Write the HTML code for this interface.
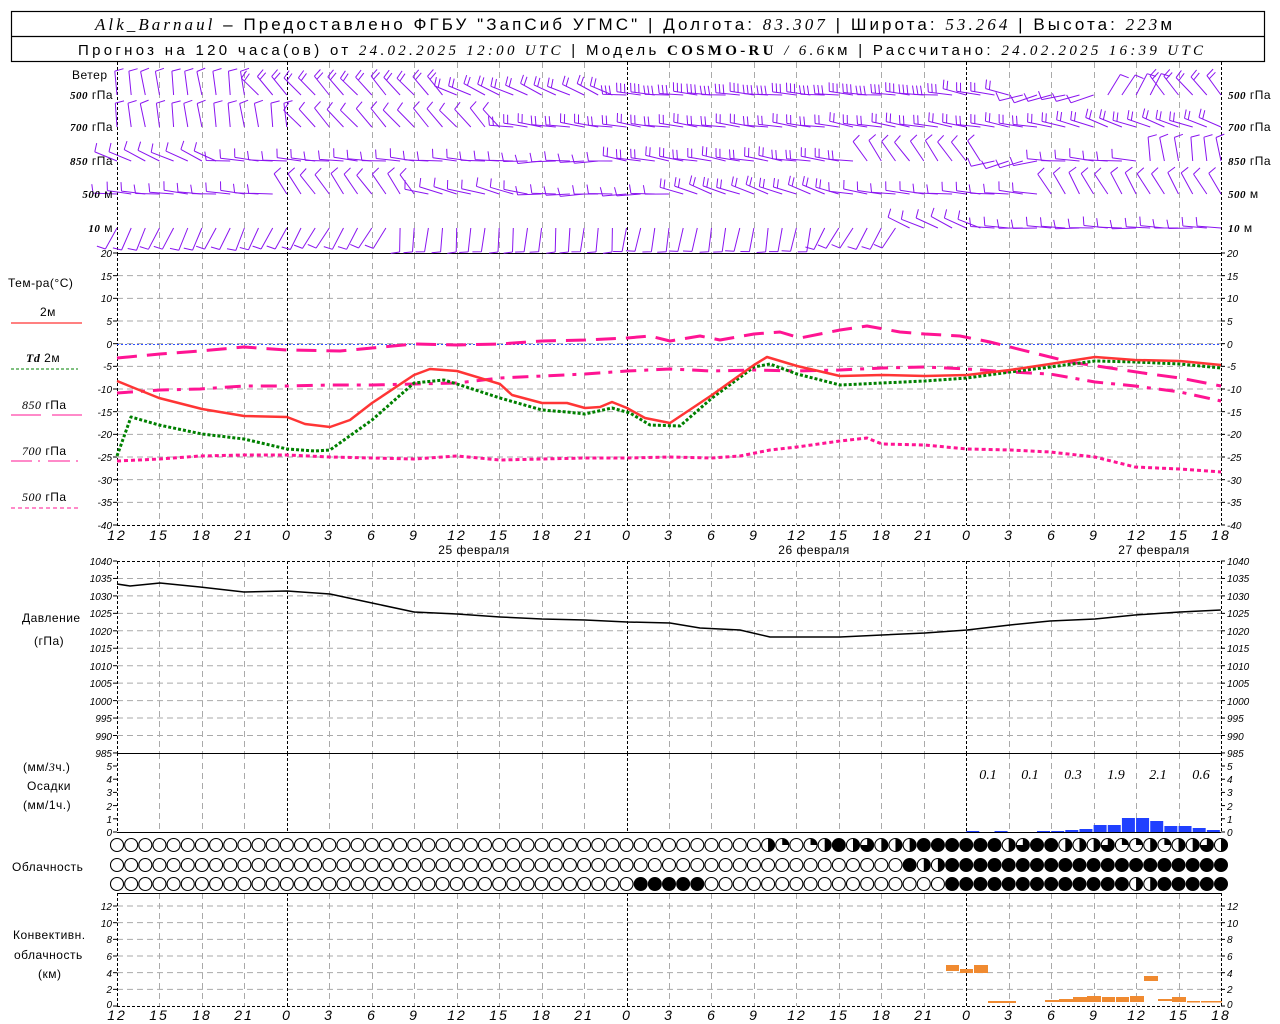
<!DOCTYPE html>
<html><head><meta charset="utf-8"><style>
html,body{margin:0;padding:0;background:#fff;width:1280px;height:1024px;overflow:hidden}
svg{display:block}
text{font-family:"Liberation Sans","DejaVu Sans",sans-serif;fill:#000}
.it{font-family:"Liberation Serif",serif;font-style:italic}
.ax{font-family:"Liberation Sans",sans-serif;font-style:italic;font-size:10px}
.tl{font-family:"Liberation Sans",sans-serif;font-style:italic;font-size:14px;letter-spacing:2px}
.lb{font-size:12px;letter-spacing:0.5px}
</style></head><body>
<svg id="s" width="1280" height="1024" viewBox="0 0 1280 1024" xmlns="http://www.w3.org/2000/svg">
<rect x="11.5" y="11.5" width="1253" height="50" fill="none" stroke="#000" stroke-width="1.2"/>
<line x1="11" y1="36.5" x2="1265" y2="36.5" stroke="#000" stroke-width="1.2"/>
<text x="95" y="30" font-size="17" letter-spacing="1" textLength="1078" lengthAdjust="spacing"><tspan class="it">Alk_Barnaul</tspan> – Предоставлено ФГБУ "ЗапСиб УГМС" | Долгота: <tspan class="it">83.307</tspan> | Широта: <tspan class="it">53.264</tspan> | Высота: <tspan class="it">223</tspan>м</text>
<text x="78" y="55" font-size="15" letter-spacing="1" textLength="1126" lengthAdjust="spacing">Прогноз на 120 часа(ов) от <tspan class="it">24.02.2025 12:00 UTC</tspan>  | Модель <tspan font-family="Liberation Serif" font-weight="bold">COSMO-RU</tspan> <tspan class="it">/ 6.6</tspan>км | Рассчитано: <tspan class="it">24.02.2025 16:39 UTC</tspan></text>

<g id="grid"></g>
<g id="data"></g>

<text x="72" y="79" class="lb">Ветер</text>
<text x="113" y="99" class="lb" text-anchor="end"><tspan class="it" font-weight="bold" font-size="11">500</tspan> гПа</text>
<text x="113" y="131" class="lb" text-anchor="end"><tspan class="it" font-weight="bold" font-size="11">700</tspan> гПа</text>
<text x="113" y="165" class="lb" text-anchor="end"><tspan class="it" font-weight="bold" font-size="11">850</tspan> гПа</text>
<text x="113" y="198" class="lb" text-anchor="end"><tspan class="it" font-weight="bold" font-size="11">500</tspan> м</text>
<text x="113" y="232" class="lb" text-anchor="end"><tspan class="it" font-weight="bold" font-size="11">10</tspan>   м</text>
<text x="1228" y="99" class="lb"><tspan class="it" font-weight="bold" font-size="11">500</tspan> гПа</text>
<text x="1228" y="131" class="lb"><tspan class="it" font-weight="bold" font-size="11">700</tspan> гПа</text>
<text x="1228" y="165" class="lb"><tspan class="it" font-weight="bold" font-size="11">850</tspan> гПа</text>
<text x="1228" y="198" class="lb"><tspan class="it" font-weight="bold" font-size="11">500</tspan> м</text>
<text x="1228" y="232" class="lb"><tspan class="it" font-weight="bold" font-size="11">10</tspan>   м</text>

<text x="8" y="287" class="lb">Тем-ра(°C)</text>
<text x="40" y="316" class="lb">2м</text>
<line x1="11" y1="323" x2="82" y2="323" stroke="#ff3535" stroke-width="1.3"/>
<text x="26" y="362" class="lb"><tspan class="it" font-weight="bold">Td</tspan>  2м</text>
<line x1="11" y1="369" x2="78" y2="369" stroke="#008000" stroke-width="1" stroke-dasharray="3 2"/>
<text x="22" y="409" class="lb"><tspan class="it">850</tspan>  гПа</text>
<line x1="11" y1="415" x2="41" y2="415" stroke="#ff1493" stroke-width="1"/><line x1="52" y1="415" x2="82" y2="415" stroke="#ff1493" stroke-width="1"/>
<text x="22" y="455" class="lb"><tspan class="it">700</tspan> гПа</text>
<line x1="11" y1="461" x2="32" y2="461" stroke="#ff1493"/><line x1="38" y1="461" x2="40" y2="461" stroke="#ff1493"/><line x1="48" y1="461" x2="70" y2="461" stroke="#ff1493"/><line x1="76" y1="461" x2="78" y2="461" stroke="#ff1493"/>
<text x="22" y="501" class="lb"><tspan class="it">500</tspan> гПа</text>
<line x1="11" y1="508" x2="78" y2="508" stroke="#ff1493" stroke-dasharray="4 3"/>

<text x="22" y="622" class="lb">Давление</text>
<text x="34" y="645" class="lb">(гПа)</text>
<text x="23" y="771" class="lb">(мм/<tspan class="it">3</tspan>ч.)</text>
<text x="27" y="790" class="lb">Осадки</text>
<text x="23" y="809" class="lb">(мм/1ч.)</text>
<text x="12" y="871" class="lb">Облачность</text>
<text x="13" y="939" class="lb">Конвективн.</text>
<text x="14" y="959" class="lb">облачность</text>
<text x="38" y="978" class="lb">(км)</text>

<text x="474" y="554" class="lb" text-anchor="middle" letter-spacing="1">25 февраля</text>
<text x="814" y="554" class="lb" text-anchor="middle" letter-spacing="1">26 февраля</text>
<text x="1154" y="554" class="lb" text-anchor="middle" letter-spacing="1">27 февраля</text>

<g font-size="14" text-anchor="middle">
<text x="988" y="779" class="it">0.1</text><text x="1030" y="779" class="it">0.1</text><text x="1073" y="779" class="it">0.3</text><text x="1116" y="779" class="it">1.9</text><text x="1158" y="779" class="it">2.1</text><text x="1201" y="779" class="it">0.6</text>
</g>

<g id="tlab">
<text class="tl" x="117" y="540" text-anchor="middle">12</text><text class="tl" x="159" y="540" text-anchor="middle">15</text><text class="tl" x="202" y="540" text-anchor="middle">18</text><text class="tl" x="244" y="540" text-anchor="middle">21</text><text class="tl" x="287" y="540" text-anchor="middle">0</text><text class="tl" x="329" y="540" text-anchor="middle">3</text><text class="tl" x="372" y="540" text-anchor="middle">6</text><text class="tl" x="414" y="540" text-anchor="middle">9</text><text class="tl" x="457" y="540" text-anchor="middle">12</text><text class="tl" x="499" y="540" text-anchor="middle">15</text><text class="tl" x="542" y="540" text-anchor="middle">18</text><text class="tl" x="584" y="540" text-anchor="middle">21</text><text class="tl" x="627" y="540" text-anchor="middle">0</text><text class="tl" x="669" y="540" text-anchor="middle">3</text><text class="tl" x="712" y="540" text-anchor="middle">6</text><text class="tl" x="754" y="540" text-anchor="middle">9</text><text class="tl" x="797" y="540" text-anchor="middle">12</text><text class="tl" x="839" y="540" text-anchor="middle">15</text><text class="tl" x="882" y="540" text-anchor="middle">18</text><text class="tl" x="924" y="540" text-anchor="middle">21</text><text class="tl" x="967" y="540" text-anchor="middle">0</text><text class="tl" x="1009" y="540" text-anchor="middle">3</text><text class="tl" x="1052" y="540" text-anchor="middle">6</text><text class="tl" x="1094" y="540" text-anchor="middle">9</text><text class="tl" x="1137" y="540" text-anchor="middle">12</text><text class="tl" x="1179" y="540" text-anchor="middle">15</text><text class="tl" x="1221" y="540" text-anchor="middle">18</text>
<text class="tl" x="117" y="1020" text-anchor="middle">12</text><text class="tl" x="159" y="1020" text-anchor="middle">15</text><text class="tl" x="202" y="1020" text-anchor="middle">18</text><text class="tl" x="244" y="1020" text-anchor="middle">21</text><text class="tl" x="287" y="1020" text-anchor="middle">0</text><text class="tl" x="329" y="1020" text-anchor="middle">3</text><text class="tl" x="372" y="1020" text-anchor="middle">6</text><text class="tl" x="414" y="1020" text-anchor="middle">9</text><text class="tl" x="457" y="1020" text-anchor="middle">12</text><text class="tl" x="499" y="1020" text-anchor="middle">15</text><text class="tl" x="542" y="1020" text-anchor="middle">18</text><text class="tl" x="584" y="1020" text-anchor="middle">21</text><text class="tl" x="627" y="1020" text-anchor="middle">0</text><text class="tl" x="669" y="1020" text-anchor="middle">3</text><text class="tl" x="712" y="1020" text-anchor="middle">6</text><text class="tl" x="754" y="1020" text-anchor="middle">9</text><text class="tl" x="797" y="1020" text-anchor="middle">12</text><text class="tl" x="839" y="1020" text-anchor="middle">15</text><text class="tl" x="882" y="1020" text-anchor="middle">18</text><text class="tl" x="924" y="1020" text-anchor="middle">21</text><text class="tl" x="967" y="1020" text-anchor="middle">0</text><text class="tl" x="1009" y="1020" text-anchor="middle">3</text><text class="tl" x="1052" y="1020" text-anchor="middle">6</text><text class="tl" x="1094" y="1020" text-anchor="middle">9</text><text class="tl" x="1137" y="1020" text-anchor="middle">12</text><text class="tl" x="1179" y="1020" text-anchor="middle">15</text><text class="tl" x="1221" y="1020" text-anchor="middle">18</text>
</g>

<g>
<text class="ax" x="112" y="257" text-anchor="end">20</text><text class="ax" x="112" y="280" text-anchor="end">15</text><text class="ax" x="112" y="302" text-anchor="end">10</text><text class="ax" x="112" y="325" text-anchor="end">5</text><text class="ax" x="112" y="348" text-anchor="end">0</text><text class="ax" x="112" y="370" text-anchor="end">-5</text><text class="ax" x="112" y="393" text-anchor="end">-10</text><text class="ax" x="112" y="416" text-anchor="end">-15</text><text class="ax" x="112" y="438" text-anchor="end">-20</text><text class="ax" x="112" y="461" text-anchor="end">-25</text><text class="ax" x="112" y="484" text-anchor="end">-30</text><text class="ax" x="112" y="506" text-anchor="end">-35</text><text class="ax" x="112" y="529" text-anchor="end">-40</text>
<text class="ax" x="1227" y="257">20</text><text class="ax" x="1227" y="280">15</text><text class="ax" x="1227" y="302">10</text><text class="ax" x="1227" y="325">5</text><text class="ax" x="1227" y="348">0</text><text class="ax" x="1227" y="370">-5</text><text class="ax" x="1227" y="393">-10</text><text class="ax" x="1227" y="416">-15</text><text class="ax" x="1227" y="438">-20</text><text class="ax" x="1227" y="461">-25</text><text class="ax" x="1227" y="484">-30</text><text class="ax" x="1227" y="506">-35</text><text class="ax" x="1227" y="529">-40</text>
<text class="ax" x="112" y="565" text-anchor="end">1040</text><text class="ax" x="112" y="582" text-anchor="end">1035</text><text class="ax" x="112" y="600" text-anchor="end">1030</text><text class="ax" x="112" y="617" text-anchor="end">1025</text><text class="ax" x="112" y="635" text-anchor="end">1020</text><text class="ax" x="112" y="652" text-anchor="end">1015</text><text class="ax" x="112" y="670" text-anchor="end">1010</text><text class="ax" x="112" y="687" text-anchor="end">1005</text><text class="ax" x="112" y="705" text-anchor="end">1000</text><text class="ax" x="112" y="722" text-anchor="end">995</text><text class="ax" x="112" y="740" text-anchor="end">990</text><text class="ax" x="112" y="757" text-anchor="end">985</text>
<text class="ax" x="1227" y="565">1040</text><text class="ax" x="1227" y="582">1035</text><text class="ax" x="1227" y="600">1030</text><text class="ax" x="1227" y="617">1025</text><text class="ax" x="1227" y="635">1020</text><text class="ax" x="1227" y="652">1015</text><text class="ax" x="1227" y="670">1010</text><text class="ax" x="1227" y="687">1005</text><text class="ax" x="1227" y="705">1000</text><text class="ax" x="1227" y="722">995</text><text class="ax" x="1227" y="740">990</text><text class="ax" x="1227" y="757">985</text>
<text class="ax" x="112" y="770" text-anchor="end">5</text><text class="ax" x="112" y="783" text-anchor="end">4</text><text class="ax" x="112" y="796" text-anchor="end">3</text><text class="ax" x="112" y="810" text-anchor="end">2</text><text class="ax" x="112" y="823" text-anchor="end">1</text><text class="ax" x="112" y="836" text-anchor="end">0</text>
<text class="ax" x="1227" y="770">5</text><text class="ax" x="1227" y="783">4</text><text class="ax" x="1227" y="796">3</text><text class="ax" x="1227" y="810">2</text><text class="ax" x="1227" y="823">1</text><text class="ax" x="1227" y="836">0</text>
<text class="ax" x="112" y="910" text-anchor="end">12</text><text class="ax" x="112" y="927" text-anchor="end">10</text><text class="ax" x="112" y="943" text-anchor="end">8</text><text class="ax" x="112" y="960" text-anchor="end">6</text><text class="ax" x="112" y="977" text-anchor="end">4</text><text class="ax" x="112" y="993" text-anchor="end">2</text><text class="ax" x="112" y="1008" text-anchor="end">0</text>
<text class="ax" x="1227" y="910">12</text><text class="ax" x="1227" y="927">10</text><text class="ax" x="1227" y="943">8</text><text class="ax" x="1227" y="960">6</text><text class="ax" x="1227" y="977">4</text><text class="ax" x="1227" y="993">2</text><text class="ax" x="1227" y="1008">0</text>
</g>
</svg>
<script>
(function(){
var NS="http://www.w3.org/2000/svg";
var G=document.getElementById("grid"),D=document.getElementById("data");
function el(p,n,a){var e=document.createElementNS(NS,n);for(var k in a)e.setAttribute(k,a[k]);p.appendChild(e);return e;}
function X(h){return 117+h*14.1538;}
function L(p,x1,y1,x2,y2,a){a=a||{};a.x1=x1;a.y1=y1;a.x2=x2;a.y2=y2;if(!a.stroke)a.stroke="#000";return el(p,"line",a);}
var panels=[[62,253],[253,525],[561,753],[753,832],[893,1006]];
var i,h,y;
for(i=1;i<12;i++){y=253+i*22.667;L(G,117,y,1221,y,{stroke:"#aaa","stroke-dasharray":"6 4"});}
for(i=1;i<11;i++){y=561+i*17.45;L(G,117,y,1221,y,{stroke:"#aaa","stroke-dasharray":"6 4"});}
for(i=1;i<7;i++){y=1006-i*16.67;L(G,117,y,1221,y,{stroke:"#aaa","stroke-dasharray":"6 4"});}
for(h=3;h<78;h+=3){var x=Math.round(X(h))+0.5;var blk=(h%24==12);
 panels.forEach(function(p){L(G,x,p[0],x,p[1],{stroke:blk?"#000":"#aaa","stroke-dasharray":blk?"3 2":"6 4"});});}
[117.5,1221.5].forEach(function(x){panels.forEach(function(p){L(G,x,p[0],x,p[1],{"stroke-dasharray":"3 2"});});});
L(G,117,253.5,1221,253.5);L(G,117,525.5,1221,525.5,{"stroke-dasharray":"3 2"});
L(G,117,561.5,1221,561.5,{"stroke-dasharray":"3 2"});L(G,117,753.5,1221,753.5);
L(G,117,832.5,1221,832.5);L(G,117,893.5,1221,893.5);L(G,117,1006.5,1221,1006.5,{"stroke-dasharray":"3 2"});
function ticks(y0,dy,n){for(var k=0;k<=n;k++){var yy=y0+k*dy;L(G,113,yy,117,yy);L(G,1221,yy,1225,yy);}}
ticks(253,22.667,12);ticks(561,17.45,11);ticks(766,13.2,5);ticks(906,16.67,6);
L(D,117,344.5,1221,344.5,{stroke:"#3050ff","stroke-dasharray":"2 2"});
function poly(pts,a){a.points=pts.map(function(p){return p[0]+","+p[1]}).join(" ");a.fill="none";a["stroke-linejoin"]="round";return el(D,"polyline",a);}
poly([[117,461],[160,459],[200,456],[244,455],[287,455],[330,457],[372,458],[414,459],[457,456],[500,460],[542,459],[585,458],[627,458],[670,457],[712,458],[740,456],[770,450],[797,447],[840,441],[867,438],[882,444],[925,445],[967,449],[1010,450],[1050,452],[1095,457],[1135,467],[1180,469],[1221,472]],{stroke:"#ff1493","stroke-width":3,"stroke-dasharray":"4 3"});
poly([[117,393],[160,390],[200,389],[244,386],[287,386],[330,385],[372,385],[414,384],[457,383],[500,378],[542,376],[585,374],[627,371],[670,369],[712,371],[754,370],[797,371],[840,370],[882,368],[925,367],[967,369],[1010,372],[1050,374],[1095,382],[1135,386],[1180,392],[1221,401]],{stroke:"#ff1493","stroke-width":3,"stroke-dasharray":"16 8 4 8"});
poly([[117,358],[160,354],[200,351],[244,347],[287,350],[340,351],[372,348],[414,344],[457,345],[500,344],[542,341],[585,340],[627,338],[650,336],[670,341],[700,336],[720,340],[754,334],[780,332],[800,338],[840,330],[867,326],[900,332],[925,334],[960,336],[990,342],[1030,352],[1070,362],[1110,368],[1150,374],[1180,378],[1221,386]],{stroke:"#ff1493","stroke-width":3,"stroke-dasharray":"20 10"});
poly([[117,456],[131,417],[159,425],[202,434],[244,439],[287,449],[315,451],[330,450],[372,420],[414,383],[444,380],[457,384],[500,398],[542,410],[567,412],[585,414],[612,408],[630,413],[650,425],[680,426],[712,398],[754,367],[770,364],[797,374],[840,385],[882,383],[925,381],[967,378],[1010,372],[1050,367],[1095,361],[1135,362],[1180,364],[1221,368]],{stroke:"#008000","stroke-width":3,"stroke-dasharray":"3 2"});
poly([[117,381],[159,398],[202,409],[244,416],[287,417],[305,424],[330,427],[350,420],[372,403],[414,375],[430,369],[457,371],[500,384],[512,395],[542,403],[567,403],[585,408],[600,407],[612,402],[627,408],[645,418],[670,423],[712,395],[754,365],[767,357],[797,366],[840,376],[882,375],[925,376],[967,375],[1010,370],[1050,364],[1095,357],[1135,360],[1180,361],[1221,365]],{stroke:"#ff3535","stroke-width":2.5});
poly([[117,584],[130,586],[160,583],[200,587],[244,592],[287,591],[330,594],[372,603],[414,612],[457,614],[500,617],[542,619],[585,620],[627,622],[670,623],[700,628],[740,630],[770,637],[800,637],[840,637],[882,635],[925,633],[967,630],[1010,625],[1050,621],[1095,619],[1135,615],[1180,612],[1221,610]],{stroke:"#000","stroke-width":1.5});
[[60,831],[62,831],[65,831],[66,831],[67,830],[68,829],[69,825],[70,825],[71,818],[72,818],[73,821],[74,826],[75,826],[76,828],[77,830]].forEach(function(b){var x=X(b[0]);el(D,"rect",{x:x,y:b[1],width:13,height:832-b[1],fill:"#2040ff"});});
[[946,965,13,6],[960,969,13,4],[974,965,14,8],[988,1001,28,2],[1045,1000,14,2],[1059,999,14,3],[1073,997,14,5],[1087,996,14,6],[1102,997,13,5],[1116,997,13,5],[1130,996,14,6],[1144,976,14,5],[1158,999,14,2],[1172,997,14,5],[1187,1001,13,1.5],[1201,1001,21,1.5]].forEach(function(b){el(D,"rect",{x:b[0],y:b[1],width:b[2],height:b[3],fill:"#f08a30"});});
function arr(def,spec){var a=[];for(var k=0;k<79;k++)a.push(def);for(var s in spec)a[+s]=spec[s];return a;}
var r1=arr(0,{46:2,47:1,49:1,50:2,51:4,52:2,53:3,54:2,55:2,56:2,57:4,58:4,59:4,60:4,61:4,62:4,63:2,64:3,65:4,66:4,67:2,68:2,69:2,70:3,71:1,72:1,73:2,74:1,75:2,76:2,77:3,78:2});
var r2=arr(0,{});for(h=56;h<79;h++)r2[h]=4;r2[57]=2;r2[58]=2;
var r3=arr(0,{});for(h=37;h<42;h++)r3[h]=4;for(h=59;h<79;h++)r3[h]=4;r3[72]=2;r3[73]=2;
function cloud(cx,cy,t){var r=6.5;
 if(t==4){el(D,"circle",{cx:cx,cy:cy,r:r,fill:"#000",stroke:"#000"});return;}
 if(t>0){var ang=t*Math.PI/2;var x2=cx+r*Math.sin(ang),y2=cy-r*Math.cos(ang);
  el(D,"path",{d:"M"+cx+","+cy+" L"+cx+","+(cy-r)+" A"+r+","+r+" 0 "+(t>2?1:0)+" 1 "+x2+","+y2+" Z",fill:"#000"});}
 el(D,"circle",{cx:cx,cy:cy,r:r,fill:"none",stroke:"#000","stroke-width":1.1});}
for(h=0;h<79;h++){cloud(X(h),845,r1[h]);cloud(X(h),865,r2[h]);cloud(X(h),884,r3[h]);}
var levels=[
 [95,[[0,262,1],[10,228,2],[24,205,2],[36,185,3],[60,192,2],[64,165,1],[70,300,1],[74,230,2]]],
 [127,[[0,262,1],[13,228,1],[28,188,2],[52,190,2],[68,200,2]]],
 [161,[[0,205,1],[8,185,1],[20,185,1],[28,178,1],[36,190,2],[48,188,2],[53,235,1],[62,165,1],[66,185,1],[73,262,1]]],
 [194,[[0,185,1],[12,235,1],[22,195,1],[30,178,1],[40,200,2],[52,188,1],[57,185,1],[66,240,1]]],
 [228,[[0,115,1],[12,120,1],[20,95,1],[36,100,1],[50,120,1],[56,205,1],[62,182,1]]]
];
var PC="#8a14f0";
function barb(x,y,a,n){var ra=a*Math.PI/180,Ls=24;var tx=x+Ls*Math.cos(ra),ty=y+Ls*Math.sin(ra);
 var d="M"+x.toFixed(1)+","+y.toFixed(1)+"L"+tx.toFixed(1)+","+ty.toFixed(1);
 var fa=(a+80)*Math.PI/180;
 for(var k=0;k<n;k++){var px=tx-k*4*Math.cos(ra),py=ty-k*4*Math.sin(ra);
  d+="M"+px.toFixed(1)+","+py.toFixed(1)+"l"+(9*Math.cos(fa)).toFixed(1)+","+(9*Math.sin(fa)).toFixed(1);}
 el(D,"path",{d:d,stroke:PC,"stroke-width":1,fill:"none"});}
levels.forEach(function(lv){var y=lv[0],sc=lv[1];
 for(h=0;h<79;h++){var s=sc[0];for(var k=0;k<sc.length;k++)if(sc[k][0]<=h)s=sc[k];
  var jitter=Math.sin(h*1.7+y)*4;barb(X(h),y,s[1]+jitter,s[2]);}});
})();
</script>
</body></html>
